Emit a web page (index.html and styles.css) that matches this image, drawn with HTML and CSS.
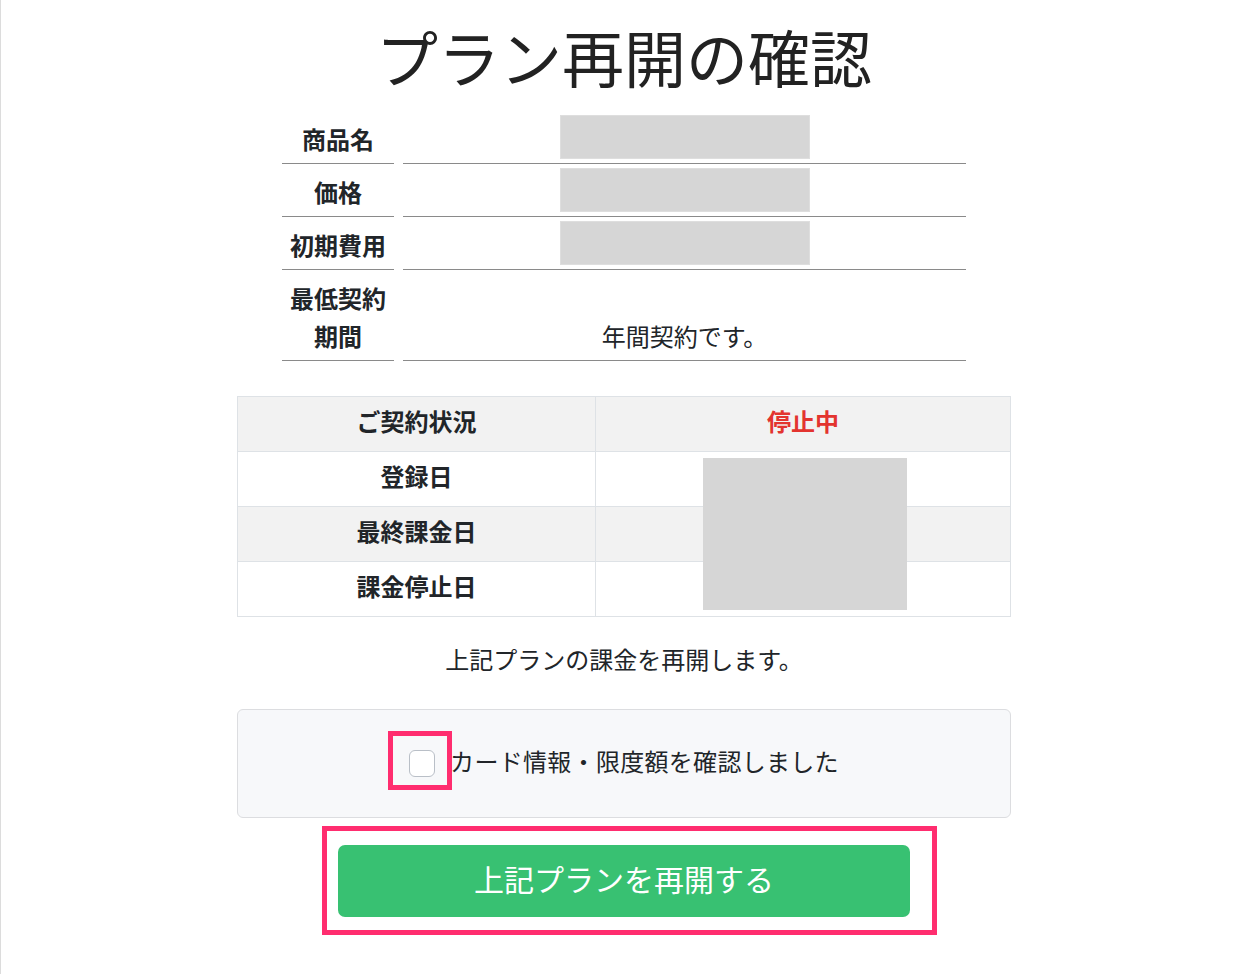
FILE: index.html
```html
<!DOCTYPE html>
<html lang="ja">

<head>
    <meta charset="UTF-8">
    <title>プラン再開の確認</title>
    <link rel="stylesheet" href="styles.css">
</head>

<body>
    <div class="page">
        <div class="container">
            <h1 class="title">プラン再開の確認</h1>

            <div class="spec">
                <div class="spec-label">商品名</div>
                <div class="spec-value"><span class="blank"></span></div>
                <div class="spec-label">価格</div>
                <div class="spec-value"><span class="blank"></span></div>
                <div class="spec-label">初期費用</div>
                <div class="spec-value"><span class="blank"></span></div>
                <div class="spec-label">最低契約期間</div>
                <div class="spec-value spec-text">年間契約です。</div>
            </div>

            <div class="status-wrap">
                <table class="status">
                    <tr>
                        <th>ご契約状況</th>
                        <td class="stopped">停止中</td>
                    </tr>
                    <tr>
                        <th>登録日</th>
                        <td></td>
                    </tr>
                    <tr>
                        <th>最終課金日</th>
                        <td></td>
                    </tr>
                    <tr>
                        <th>課金停止日</th>
                        <td></td>
                    </tr>
                </table>
                <!-- redacted dates -->
                <span class="blank-dates"></span>
            </div>

            <p class="notice">上記プランの課金を再開します。</p>

            <div class="confirm">
                <label class="confirm-label">
                    <span class="check-wrap">
                        <input type="checkbox" class="check">
                        <span class="mark mark-check"></span>
                    </span>
                    <span class="confirm-text">カード情報・限度額を確認しました</span>
                </label>
            </div>

            <div class="action">
                <button class="submit">上記プランを再開する</button>
            </div>
        </div>
    </div>
</body>

</html>
```

FILE: styles.css
```css
body {
    margin: 0;
    font-family: "Noto Sans CJK JP", "Noto Sans", sans-serif;
    color: #212529;
    background: #fff;
}

.page {
    min-height: 100vh;
    border-left: 1px solid #dcdcdc;
    padding: 20px 0 0 8px;
    box-sizing: border-box;
}

.container {
    width: 774px;
    margin: 0 auto;
}

.title {
    margin: 0 0 19px 0;
    font-size: 62px;
    line-height: 72px;
    font-weight: 400;
    text-align: center;
    color: #222;
}

/* product spec */
.spec {
    display: grid;
    grid-template-columns: 112px 1fr;
    column-gap: 9px;
    width: 684px;
    margin: 0 auto;
    font-size: 24px;
}

.spec-label,
.spec-value {
    display: flex;
    align-items: flex-end;
    justify-content: center;
    border-bottom: 1px solid #8a8a8a;
    min-height: 52px;
    box-sizing: border-box;
}

.spec-label {
    padding: 9px 0 5px 0;
    line-height: 38px;
    font-weight: 700;
    text-align: center;
}

.spec-value {
    padding: 4px 0;
}

.spec-value.spec-text {
    padding: 9px 0 5px 0;
    line-height: 38px;
}

.blank {
    display: block;
    width: 250px;
    height: 44px;
    background: #d6d6d6;
    box-shadow: inset 0 0 0 1px #dedede;
}

/* status table */
.status-wrap {
    position: relative;
    margin-top: 35px;
}

.status {
    width: 100%;
    border-collapse: collapse;
    font-size: 24px;
}

.status th,
.status td {
    height: 55px;
    padding: 0 0 6px 0;
    box-sizing: border-box;
    border: 1px solid #dee2e6;
    text-align: center;
    font-weight: 700;
    line-height: 36px;
}

.status th {
    width: 358px;
}

.status tr:nth-child(odd) {
    background: #f2f2f2;
}

.stopped {
    color: #e3342f;
}

.blank-dates {
    position: absolute;
    left: 466px;
    top: 62px;
    width: 204px;
    height: 152px;
    background: #d6d6d6;
}

.notice {
    margin: 24px 0 30px 0;
    padding-bottom: 2px;
    font-size: 24px;
    line-height: 36px;
    text-align: center;
}

/* confirm box */
.confirm {
    display: flex;
    align-items: center;
    justify-content: center;
    height: 107px;
    background: #f7f8fa;
    border: 1px solid #dcdde0;
    border-radius: 6px;
}

.confirm-label {
    display: flex;
    align-items: center;
    font-size: 24px;
    line-height: 36px;
}

.confirm-text {
    margin-bottom: 6px;
    letter-spacing: 0.3px;
}

.check-wrap {
    position: relative;
    display: inline-flex;
    margin-right: 15px;
}

.check {
    appearance: none;
    -webkit-appearance: none;
    width: 26px;
    height: 27px;
    margin: 0;
    background: #fff;
    border: 1px solid #b9bfc7;
    border-radius: 6px;
}

.mark {
    position: absolute;
    border: 5px solid #ff2d6f;
    box-sizing: border-box;
    pointer-events: none;
}

.mark-check {
    left: -21px;
    top: -19px;
    width: 64px;
    height: 59px;
}

/* action button */
.action {
    width: fit-content;
    margin: 8px 0 0 85px;
    padding: 14px 22px 13px 11px;
    border: 5px solid #ff2d6f;
}

.submit {
    display: block;
    width: 572px;
    height: 72px;
    padding: 0 0 6px 0;
    border: none;
    border-radius: 7px;
    background-color: #38c172;
    color: #fff;
    font-family: inherit;
    font-size: 30px;
    cursor: pointer;
}

.submit:hover {
    background-color: #2fb066;
}
```
